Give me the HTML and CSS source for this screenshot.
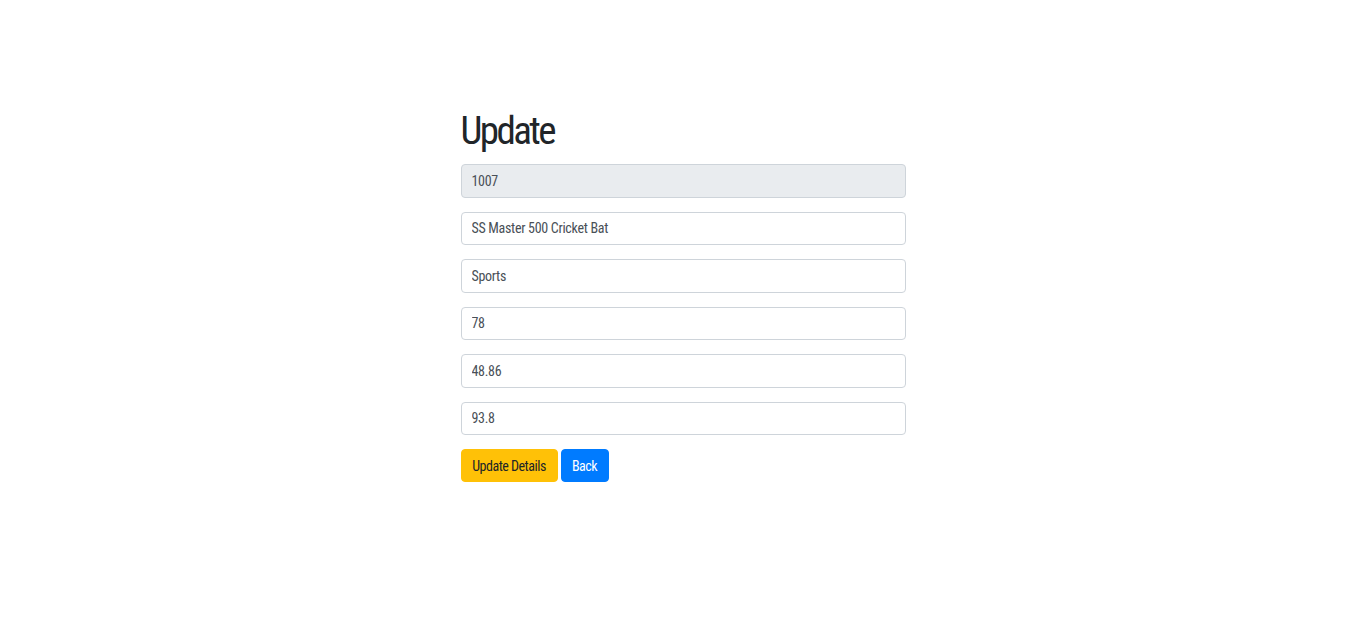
FILE: index.html
```html
<!DOCTYPE html>
<html lang="en">
<head>
<meta charset="utf-8">
<title>Update</title>
<link rel="stylesheet" href="styles.css">
</head>
<body>
<main class="container">
  <h1 class="title">Update</h1>
  <form class="form">
    <input class="field" type="text" value="1007" disabled>
    <input class="field" type="text" value="SS Master 500 Cricket Bat">
    <input class="field" type="text" value="Sports">
    <input class="field" type="text" value="78">
    <input class="field" type="text" value="48.86">
    <input class="field" type="text" value="93.8">
    <div class="actions">
      <button type="button" class="btn btn-warning">Update Details</button>
      <button type="button" class="btn btn-primary">Back</button>
    </div>
  </form>
</main>
</body>
</html>
```
FILE: styles.css
```css
* { box-sizing: border-box; }
html, body { margin: 0; background: #fff; }
body {
  font-family: "Roboto Condensed", "Liberation Sans", sans-serif;
  color: #212529;
}
.container {
  width: 445px;
  margin: 0 auto;
  padding-top: 107px;
}
.title {
  margin: 0 0 9px;
  font-size: 39px;
  line-height: 48px;
  font-weight: 400;
  letter-spacing: -2.6px;
  color: #212529;
}
.form {
  display: flex;
  flex-direction: column;
}
.field {
  display: block;
  width: 100%;
  height: 33.5px;
  margin: 0 0 14px;
  padding: 0 10px;
  font-family: inherit;
  font-size: 14px;
  letter-spacing: -0.3px;
  color: #495057;
  background: #fff;
  border: 1px solid #ced4da;
  border-radius: 4px;
  outline: none;
}
.field:disabled {
  background: #e9ecef;
  color: #495057;
  opacity: 1;
}
.actions {
  display: flex;
  gap: 3px;
}
.btn {
  height: 33px;
  padding: 0;
  font-family: inherit;
  font-size: 14px;
  letter-spacing: -0.5px;
  white-space: nowrap;
  border: 1px solid transparent;
  border-radius: 4px;
  cursor: pointer;
}
.btn-warning {
  background: #ffc107;
  border-color: #ffc107;
  color: #212529;
  width: 97px;
}
.btn-primary {
  background: #007bff;
  border-color: #007bff;
  color: #fff;
  width: 48px;
}
```
